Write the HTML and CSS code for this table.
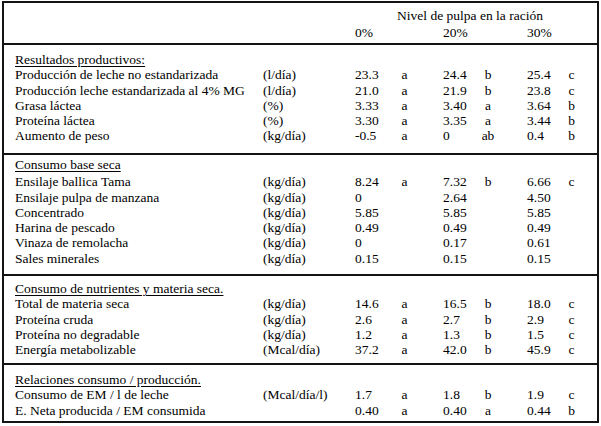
FILE: index.html
```html
<!DOCTYPE html>
<html lang="es">
<head>
<meta charset="utf-8">
<title>Nivel de pulpa en la ración</title>
<link rel="stylesheet" href="styles.css">
</head>
<body>
<div class="table">
  <div class="head">
    <div class="row"><span class="title">Nivel de pulpa en la ración</span></div>
    <div class="row row-pct"><span></span><span></span><span>0%</span><span></span><span class="v2">20%</span><span></span><span class="v3">30%</span></div>
  </div>

  <div class="sec s1">
    <div class="sec-title"><u>Resultados productivos:</u></div>
    <div class="row"><span>Producción de leche no estandarizada</span><span>(l/día)</span><span>23.3</span><span class="l">a</span><span class="v2">24.4</span><span class="l">b</span><span class="v3">25.4</span><span class="l">c</span></div>
    <div class="row"><span>Producción leche estandarizada al 4% MG</span><span>(l/día)</span><span>21.0</span><span class="l">a</span><span class="v2">21.9</span><span class="l">b</span><span class="v3">23.8</span><span class="l">c</span></div>
    <div class="row"><span>Grasa láctea</span><span>(%)</span><span>3.33</span><span class="l">a</span><span class="v2">3.40</span><span class="l">a</span><span class="v3">3.64</span><span class="l">b</span></div>
    <div class="row"><span>Proteína láctea</span><span>(%)</span><span>3.30</span><span class="l">a</span><span class="v2">3.35</span><span class="l">a</span><span class="v3">3.44</span><span class="l">b</span></div>
    <div class="row"><span>Aumento de peso</span><span>(kg/día)</span><span>-0.5</span><span class="l">a</span><span class="v2">0</span><span class="l">ab</span><span class="v3">0.4</span><span class="l">b</span></div>
  </div>

  <div class="sec s2">
    <div class="sec-title"><u>Consumo base seca</u></div>
    <div class="row"><span>Ensilaje ballica Tama</span><span>(kg/día)</span><span>8.24</span><span class="l">a</span><span class="v2">7.32</span><span class="l">b</span><span class="v3">6.66</span><span class="l">c</span></div>
    <div class="row"><span>Ensilaje pulpa de manzana</span><span>(kg/día)</span><span>0</span><span class="l"></span><span class="v2">2.64</span><span class="l"></span><span class="v3">4.50</span><span class="l"></span></div>
    <div class="row"><span>Concentrado</span><span>(kg/día)</span><span>5.85</span><span class="l"></span><span class="v2">5.85</span><span class="l"></span><span class="v3">5.85</span><span class="l"></span></div>
    <div class="row"><span>Harina de pescado</span><span>(kg/día)</span><span>0.49</span><span class="l"></span><span class="v2">0.49</span><span class="l"></span><span class="v3">0.49</span><span class="l"></span></div>
    <div class="row"><span>Vinaza de remolacha</span><span>(kg/día)</span><span>0</span><span class="l"></span><span class="v2">0.17</span><span class="l"></span><span class="v3">0.61</span><span class="l"></span></div>
    <div class="row"><span>Sales minerales</span><span>(kg/día)</span><span>0.15</span><span class="l"></span><span class="v2">0.15</span><span class="l"></span><span class="v3">0.15</span><span class="l"></span></div>
  </div>

  <div class="sec s3">
    <div class="sec-title"><u>Consumo de nutrientes y materia seca.</u></div>
    <div class="row"><span>Total de materia seca</span><span>(kg/día)</span><span>14.6</span><span class="l">a</span><span class="v2">16.5</span><span class="l">b</span><span class="v3">18.0</span><span class="l">c</span></div>
    <div class="row"><span>Proteína cruda</span><span>(kg/día)</span><span>2.6</span><span class="l">a</span><span class="v2">2.7</span><span class="l">b</span><span class="v3">2.9</span><span class="l">c</span></div>
    <div class="row"><span>Proteína no degradable</span><span>(kg/día)</span><span>1.2</span><span class="l">a</span><span class="v2">1.3</span><span class="l">b</span><span class="v3">1.5</span><span class="l">c</span></div>
    <div class="row"><span>Energía metabolizable</span><span>(Mcal/día)</span><span>37.2</span><span class="l">a</span><span class="v2">42.0</span><span class="l">b</span><span class="v3">45.9</span><span class="l">c</span></div>
  </div>

  <div class="sec s4">
    <div class="sec-title"><u>Relaciones consumo / producción.</u></div>
    <div class="row"><span>Consumo de EM / l de leche</span><span>(Mcal/día/l)</span><span>1.7</span><span class="l">a</span><span class="v2">1.8</span><span class="l">b</span><span class="v3">1.9</span><span class="l">c</span></div>
    <div class="row"><span>E. Neta producida / EM consumida</span><span></span><span>0.40</span><span class="l">a</span><span class="v2">0.40</span><span class="l">a</span><span class="v3">0.44</span><span class="l">b</span></div>
  </div>
</div>
</body>
</html>
```

FILE: styles.css
```css
html, body {
  margin: 0;
  padding: 0;
  background: #ffffff;
}

body {
  font-family: "Liberation Serif", "Times New Roman", serif;
  font-size: 13.5px;
  color: #000000;
}

.table {
  margin: 1px 0 0 2px;
  width: 597px;
  height: 422px;
  box-sizing: border-box;
  border: 2px solid #141414;
  display: flex;
  flex-direction: column;
}

.row {
  display: grid;
  grid-template-columns: 248px 92px 37px 25px 58px 26px 57px 27px 1fr;
  line-height: 15.3px;
  white-space: nowrap;
}

.row > .l {
  text-align: center;
}

.row > .v2,
.row > .v3 {
  padding-left: 26px;
}

.head {
  padding: 5px 0 3px 11px;
  height: 40px;
  box-sizing: border-box;
}

.head .title {
  grid-column: 3 / 9;
  text-align: center;
}

.row-pct {
  margin-top: 2px;
}

.sec {
  border-top: 2px solid #141414;
  padding-left: 11px;
  box-sizing: border-box;
}

.sec-title {
  line-height: 15.3px;
}

.sec-title u {
  text-decoration-thickness: 1px;
  text-underline-offset: 2px;
}

.s1 {
  height: 110px;
  padding-top: 7px;
}

.s2 {
  height: 121px;
  padding-top: 2px;
}

.s2 .sec-title {
  margin-bottom: 2px;
}

.s3 {
  height: 89px;
  padding-top: 5px;
}

.s4 {
  flex: 1;
  padding-top: 7px;
}
```
